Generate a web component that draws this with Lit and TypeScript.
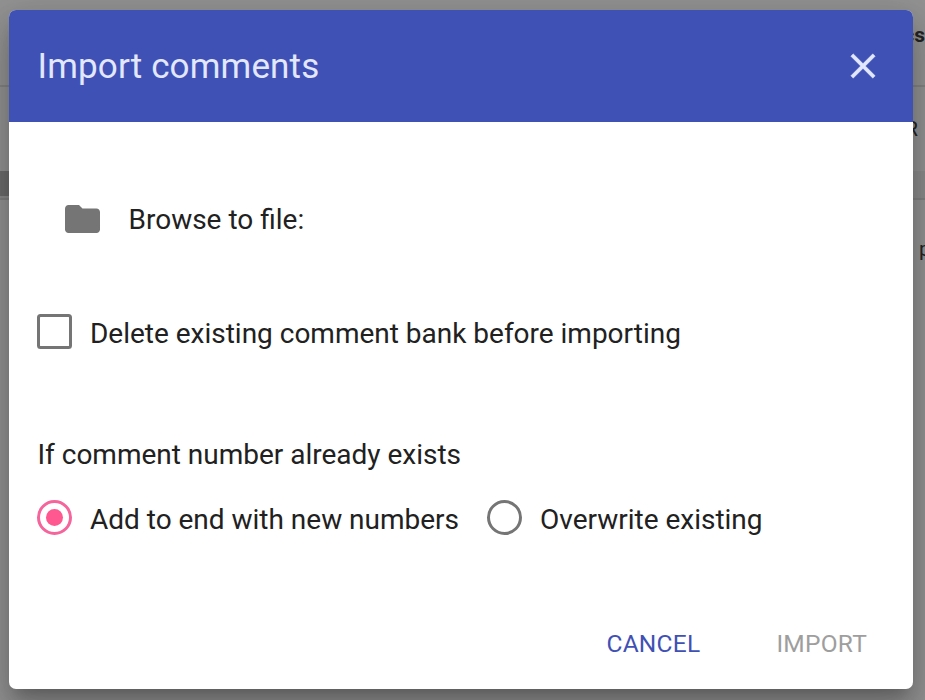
import { LitElement, html, css } from "lit";
import { customElement, state } from "lit/decorators.js";

@customElement("page-behind")
class PageBehind extends LitElement {
  static styles = css`
    :host {
      display: flex;
      flex-direction: column;
      height: 700px;
      background: #929292;
      color: #242424;
      font: 21px/24px Roboto, sans-serif;
      overflow: hidden;
    }
    .row {
      box-sizing: border-box;
      display: flex;
      justify-content: flex-end;
      align-items: center;
      flex: none;
      white-space: nowrap;
    }
    .title { height: 87px; padding-bottom: 15px; font-weight: 700; border-bottom: 2px solid #838383; }
    .names { height: 84px; padding: 0 7px 1px 0; }
    .band {
      height: 29px;
      background: #8b8b8b;
      border-bottom: 2px solid #808080;
      justify-content: flex-start;
      align-items: flex-start;
    }
    .thumb { width: 40px; height: 25px; background: #6c6c6c; }
    .entry { height: 98px; }
    .entry span { width: 6px; }
  `;
  render() {
    return html`
      <div class="row title">cs</div>
      <div class="row names">R</div>
      <div class="row band"><div class="thumb"></div></div>
      <div class="row entry"><span>p</span></div>
    `;
  }
}

@customElement("choice-option")
class ChoiceOption extends LitElement {
  static properties = { kind: {}, checked: { type: Boolean } };
  declare kind: string;
  declare checked: boolean;
  static styles = css`
    :host { display: flex; align-items: center; cursor: pointer; white-space: nowrap; }
    .mark {
      box-sizing: border-box;
      flex: none;
      display: grid;
      place-items: center;
      width: 35px;
      height: 35px;
      margin: 0 18px 1px 0;
      border: 3px solid #757575;
      border-radius: 3.5px;
    }
    .radio { border-radius: 50%; }
    .on { border-color: #f5649a; }
    .dot { width: 17.5px; height: 17.5px; border-radius: 50%; background: #ff5790; }
    .label { padding-top: 4px; }
  `;
  render() {
    return html`
      <div class="mark ${this.kind} ${this.checked ? "on" : ""}">
        ${this.checked ? html`<div class="dot"></div>` : ""}
      </div>
      <div class="label"><slot></slot></div>
    `;
  }
}

@customElement("app-root")
class AppRoot extends LitElement {
  static styles = css`
    :host {
      display: grid;
      width: 925px;
      height: 700px;
      overflow: hidden;
      font-family: Roboto, sans-serif;
    }
    page-behind, .dialog { grid-area: 1 / 1; }
    .dialog {
      z-index: 1;
      display: flex;
      flex-direction: column;
      width: 904px;
      height: 679px;
      margin: 10px 0 0 9px;
      border-radius: 7px;
      overflow: hidden;
      background: #fff;
      color: #212121;
      font-size: 28px;
      line-height: 36px;
      letter-spacing: -0.01px;
      font-variant-ligatures: common-ligatures;
      box-shadow: 0 12px 14px -7px rgba(0, 0, 0, 0.2),
        0 23px 33px 3px rgba(0, 0, 0, 0.14), 0 9px 42px 7px rgba(0, 0, 0, 0.12);
    }
    .toolbar {
      box-sizing: border-box;
      flex: none;
      display: flex;
      align-items: center;
      justify-content: space-between;
      height: 112px;
      padding: 0 29px 0 28.5px;
      background: #3f51b5;
      color: #e2e7fd;
    }
    h2 { margin: 0; padding-top: 2px; font-size: 35px; font-weight: 400; letter-spacing: 0.14px; }
    svg { display: block; }
    .body { flex: 1; padding: 0 28px; display: flex; flex-direction: column; }
    .browse { display: flex; align-items: center; gap: 28.5px; height: 36px; margin: 79px 0 0 28px; }
    .browse span { padding-top: 2px; letter-spacing: 0; }
    .remove { margin-top: 75px; height: 40px; }
    .question { margin: 85px 0 0 0.5px; height: 36px; }
    .options { display: flex; gap: 28px; margin-top: 25px; height: 40px; }
    .actions {
      flex: none;
      display: flex;
      justify-content: flex-end;
      gap: 76px;
      padding: 0 46px 27px 0;
      font-size: 24.5px;
      letter-spacing: 0.245px;
    }
    button { all: unset; cursor: pointer; }
    .primary { color: #3f51b5; }
    .disabled { color: #9e9e9e; cursor: default; }
  `;

  @state() mode = "append";

  render() {
    return html`
      <page-behind></page-behind>
      <div class="dialog">
        <div class="toolbar">
          <h2>Import comments</h2>
          <svg width="42" height="42" viewBox="0 0 24 24" fill="currentColor" stroke="currentColor" stroke-width="0.2">
            <path d="M19 6.41L17.59 5 12 10.59 6.41 5 5 6.41 10.59 12 5 17.59 6.41 19 12 13.41 17.59 19 19 17.59 13.41 12z" />
          </svg>
        </div>
        <div class="body">
          <div class="browse">
            <svg width="35" height="28" viewBox="2 4 20 16" fill="#757575">
              <path d="M10 4H4c-1.1 0-1.99.9-1.99 2L2 18c0 1.1.9 2 2 2h16c1.1 0 2-.9 2-2V8c0-1.1-.9-2-2-2h-8l-2-2z" />
            </svg>
            <span>Browse to file:</span>
          </div>
          <choice-option class="remove" kind="box">Delete existing comment bank before importing</choice-option>
          <div class="question">If comment number already exists</div>
          <div class="options">
            <choice-option kind="radio" ?checked=${this.mode === "append"}
              @click=${() => (this.mode = "append")}>Add to end with new numbers</choice-option>
            <choice-option kind="radio" ?checked=${this.mode === "overwrite"}
              @click=${() => (this.mode = "overwrite")}>Overwrite existing</choice-option>
          </div>
        </div>
        <div class="actions">
          <button class="primary">CANCEL</button>
          <button class="disabled">IMPORT</button>
        </div>
      </div>
    `;
  }
}
